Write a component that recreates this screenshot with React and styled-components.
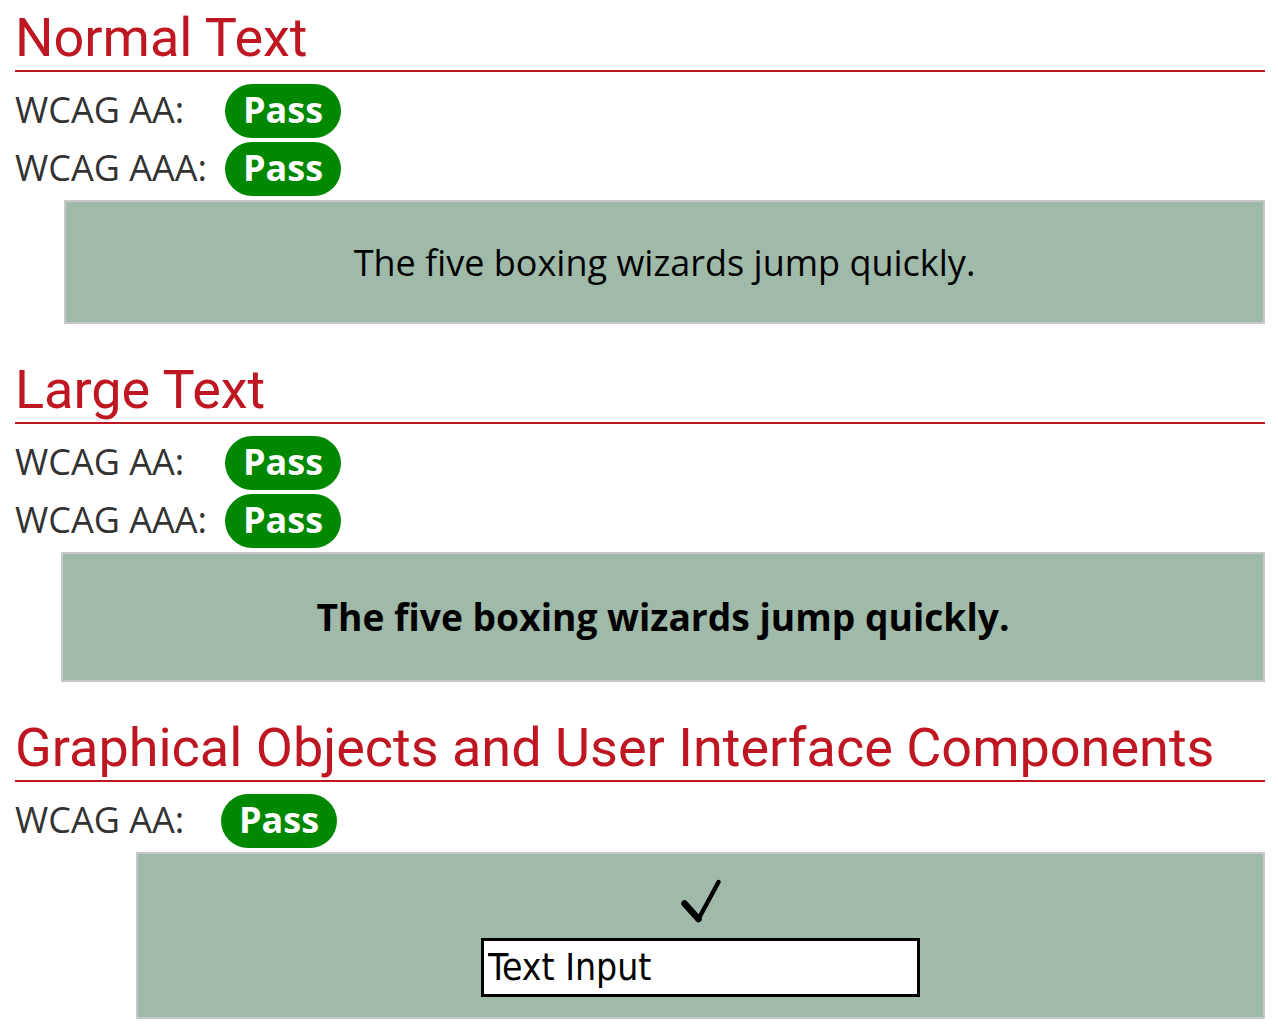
import React from "react";
import styled, { createGlobalStyle } from "styled-components";

const GlobalStyle = createGlobalStyle`
  html, body {
    margin: 0;
    padding: 0;
    background: #ffffff;
  }
  body {
    font-family: "Open Sans", "Noto Sans", sans-serif;
    color: #333333;
  }
`;

const Page = styled.main`
  padding: 0 13px 0 15px;
  display: flex;
  flex-direction: column;
`;

const Section = styled.section`
  display: flex;
  flex-direction: column;
`;

const Heading = styled.h2`
  margin: ${(p) => p.$top}px 0 0;
  padding: 0;
  font-family: Roboto, "Liberation Sans", sans-serif;
  font-weight: 400;
  font-size: 54px;
  line-height: 65px;
  color: #bf1722;
  border-bottom: 2px solid #bf1722;
`;

const Results = styled.div`
  display: grid;
  grid-template-columns: ${(p) => p.$labelWidth}px auto;
  justify-content: start;
  align-items: center;
  row-gap: 4px;
  margin: 12px 0 4px;
`;

const Label = styled.span`
  font-size: 36px;
  line-height: 50px;
  padding: 1px 0 3px;
  color: #333333;
  white-space: nowrap;
`;

const Badge = styled.span`
  justify-self: start;
  background: #008800;
  color: #ffffff;
  font-weight: 700;
  font-size: 36px;
  line-height: 50px;
  padding: 1px 18px 3px;
  border-radius: 27px;
`;

const Sample = styled.div`
  margin-left: ${(p) => p.$indent}px;
  padding: ${(p) => p.$pad};
  background: #a0baa9;
  border: 2px solid #c8c8c8;
  text-align: center;
  color: #000000;
`;

const SampleText = styled.p`
  margin: 0;
  font-size: ${(p) => (p.$bold ? 37.2 : 36)}px;
  line-height: ${(p) => (p.$bold ? 50 : 49)}px;
  font-weight: ${(p) => (p.$bold ? 700 : 400)};
`;

const CheckMark = styled.svg`
  display: block;
  margin: 0 auto;
  width: 40px;
  height: 44px;
`;

const TextInput = styled.input`
  display: block;
  box-sizing: border-box;
  width: 439px;
  height: 59px;
  margin: 15px auto 0;
  padding: 0 4px;
  border: 3px solid #000000;
  border-radius: 0;
  background: #ffffff;
  color: #000000;
  font-family: "DejaVu Sans Condensed", "DejaVu Sans", sans-serif;
  font-stretch: condensed;
  font-size: 37px;
  outline: none;
`;

function ResultRows({ labelWidth, levels }) {
  return (
    <Results $labelWidth={labelWidth}>
      {levels.map((level) => (
        <React.Fragment key={level}>
          <Label>{level}:</Label>
          <Badge>Pass</Badge>
        </React.Fragment>
      ))}
    </Results>
  );
}

export default function App() {
  return (
    <>
      <GlobalStyle />
      <Page>
        <Section>
          <Heading $top={5}>Normal Text</Heading>
          <ResultRows labelWidth={210} levels={["WCAG AA", "WCAG AAA"]} />
          <Sample $indent={49} $pad="36px 0 35px">
            <SampleText>The five boxing wizards jump quickly.</SampleText>
          </Sample>
        </Section>
        <Section>
          <Heading $top={33}>Large Text</Heading>
          <ResultRows labelWidth={210} levels={["WCAG AA", "WCAG AAA"]} />
          <Sample $indent={46} $pad="38px 0 38px">
            <SampleText $bold>The five boxing wizards jump quickly.</SampleText>
          </Sample>
        </Section>
        <Section>
          <Heading $top={33}>Graphical Objects and User Interface Components</Heading>
          <ResultRows labelWidth={206} levels={["WCAG AA"]} />
          <Sample $indent={121} $pad="25px 0 20px">
            <CheckMark viewBox="0 0 40 44" aria-hidden="true">
              <path d="M3.5 24.5 L17.5 40" stroke="#000" strokeWidth="6.5" strokeLinecap="round" fill="none" />
              <path d="M17.5 40 L37.5 3" stroke="#000" strokeWidth="4.4" strokeLinecap="round" fill="none" />
            </CheckMark>
            <TextInput type="text" defaultValue="Text Input" readOnly aria-label="Text Input" />
          </Sample>
        </Section>
      </Page>
    </>
  );
}
